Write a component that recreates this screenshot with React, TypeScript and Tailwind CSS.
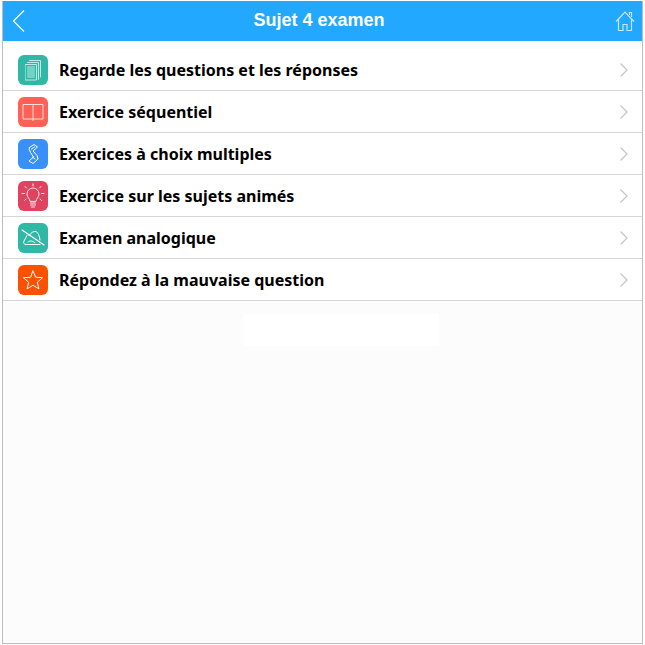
import type { ReactNode } from 'react'

type MenuItem = {
  label: string
  color: string
  icon: ReactNode
}

const stroke = { fill: 'none', stroke: '#fff', strokeLinecap: 'round', strokeLinejoin: 'round' } as const

function Glyph({ children, opacity = 1 }: { children: ReactNode; opacity?: number }) {
  return (
    <svg width="30" height="30" viewBox="0 0 30 30" opacity={opacity} {...stroke} strokeWidth={1}>
      {children}
    </svg>
  )
}

const items: MenuItem[] = [
  {
    label: 'Regarde les questions et les réponses',
    color: 'bg-[#2fb8a5]',
    icon: (
      <Glyph opacity={0.7}>
        <path d="M11.500 5.500h11v16.500" />
        <path d="M9.500 7.500h11v17" />
        <path d="M7.500 9.500h11V25h-11z" />
        <path d="M9.500 12h7M9.500 14h7M9.500 16h7M9.500 18h7M9.500 20h7M9.500 22h7" />
      </Glyph>
    ),
  },
  {
    label: 'Exercice séquentiel',
    color: 'bg-[#ff6157]',
    icon: (
      <Glyph opacity={0.8}>
        <path d="M15 7.500H5v14.500h10V7.500h10v14.500h-10" />
        <path d="M15 22v1.500" />
      </Glyph>
    ),
  },
  {
    label: 'Exercices à choix multiples',
    color: 'bg-[#3890f8]',
    icon: (
      <Glyph>
        <path d="M11.500 8.500l4.500-3 3.500 2.500-4.500 4 4 4.500 1 3.500-5 4.500-4-2.500 4.500-4-3-4.500-1-2.500z" />
        <path d="M13.500 10l3-2M14.500 18l2.500 2" />
      </Glyph>
    ),
  },
  {
    label: 'Exercice sur les sujets animés',
    color: 'bg-[#e0435f]',
    icon: (
      <Glyph opacity={0.9}>
        <path d="M12 20c0-2.500-3-3.500-3-7a6 6 0 0 1 12 0c0 3.500-3 4.500-3 7z" />
        <path d="M12.500 22h5M12.500 24h5M13.500 26h3" />
        <path d="M15 3v2M7 5.500l1.500 1.500M23 5.500L21.500 7M4 12.500h2.500M23.500 12.500H26M6.500 19.500L8 18M23.500 19.500L22 18" />
      </Glyph>
    ),
  },
  {
    label: 'Examen analogique',
    color: 'bg-[#2fb8a5]',
    icon: (
      <Glyph>
        <path d="M4 7l22 15" strokeWidth={1.300} />
        <path d="M9 12.500l-3 5.500c-1 2 0 3.500 2 3.500h14" />
        <path d="M11 12.500c2-3 5-4.500 7-4 2 1 3.500 4 4 8.500" />
        <path d="M10 19c2-1.500 4-1.500 6.500.5" />
      </Glyph>
    ),
  },
  {
    label: 'Répondez à la mauvaise question',
    color: 'bg-[#ff5000]',
    icon: (
      <Glyph>
        <path d="M15 6l2.700 6.200 6.800.6-5.200 4.400 1.600 6.600L15 20.300l-5.900 3.500 1.600-6.600-5.200-4.400 6.800-.6z" />
      </Glyph>
    ),
  },
]

export default function App() {
  return (
    <div className="h-[645px] w-[645px] overflow-hidden bg-white pt-px pr-[2px] pb-[1px] pl-[2px] font-['Noto_Sans',sans-serif]">
      <div className="flex h-full flex-col border-x border-b border-[#bdbdbd] bg-[#fcfcfc]">
        <header className="flex h-[40px] shrink-0 items-center justify-between bg-[#22a8ff] pr-[7px] pl-[8px] text-white">
          <svg width="16" height="24" viewBox="0 0 16 24" fill="none" stroke="#fff" strokeWidth="1.200">
            <path d="M13 1.500L2.500 12 13 22.500" />
          </svg>
          <h1 className="mr-[4px] mb-[2px] font-['Liberation_Sans',sans-serif] text-[18px] leading-none font-bold">Sujet 4 examen</h1>
          <svg width="20" height="22" viewBox="0 0 20 22" fill="none" stroke="#fff" strokeOpacity="0.75" strokeWidth="1.200">
            <path d="M1 11.500L10 2l9 9.500M3.500 9.500V20.500h4.500v-6h4v6h4.500V9.500" />
            <path d="M14.500 5V2.500h2V7" />
          </svg>
        </header>

        <ul className="mt-[8px] bg-white">
          {items.map(item => (
            <li key={item.label} className="flex h-[42px] items-center border-b border-[#d6d6d6] pr-[13px] pl-[15px]">
              <span className={`flex h-[30px] w-[30px] shrink-0 items-center justify-center rounded-[6px] ${item.color}`}>
                {item.icon}
              </span>
              <span className="ml-[11px] flex-1 text-[16px] leading-none font-bold text-black">{item.label}</span>
              <svg width="10" height="16" viewBox="0 0 10 16" fill="none" stroke="#c4c4c4" strokeWidth="1.200">
                <path d="M1.500 1.500L8 8l-6.500 6.500" />
              </svg>
            </li>
          ))}
        </ul>

        <div className="mt-[13px] ml-[240px] h-[32px] w-[196px] bg-white" />
      </div>
    </div>
  )
}
